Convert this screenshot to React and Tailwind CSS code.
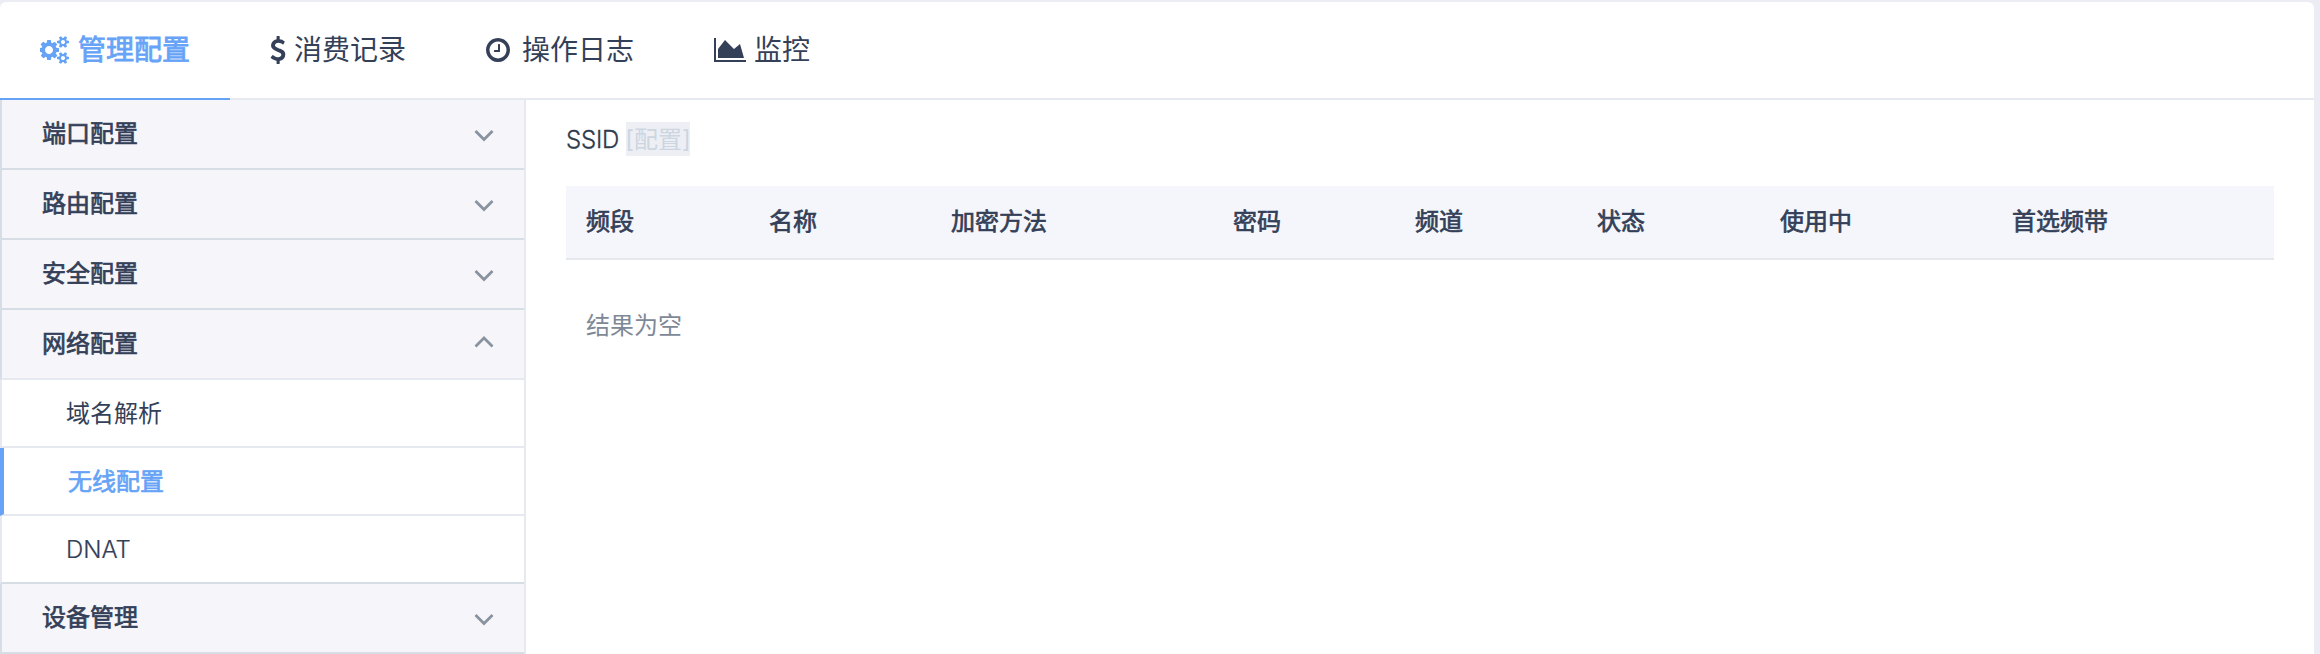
const COGS =
  "M832 896q0-106-75-181t-181-75-181 75-75 181 75 181 181 75 181-75 75-181zm768 512q0-52-38-90t-90-38-90 38-38 90q0 53 37.5 90.5t90.5 37.5 90.5-37.5 37.5-90.5zm0-1024q0-52-38-90t-90-38-90 38-38 90q0 53 37.5 90.5t90.5 37.5 90.5-37.5 37.5-90.5zm-384 421v185q0 10-7 19.5t-16 10.5l-155 24q-11 35-32 76 34 48 90 115 7 11 7 20 0 12-7 19-23 30-82.5 89.5t-78.5 59.5q-11 0-21-7l-115-90q-37 19-77 31-11 108-23 155-7 24-30 24h-186q-11 0-20-7.5t-10-17.5l-23-153q-34-10-75-31l-118 89q-7 7-20 7-11 0-21-8-144-133-144-160 0-9 7-19 10-14 41-53t47-61q-23-44-35-82l-152-24q-10-1-17-9.5t-7-19.5v-185q0-10 7-19.5t16-10.5l155-24q11-35 32-76-34-48-90-115-7-11-7-20 0-12 7-20 22-30 82-89t79-59q11 0 21 7l115 90q34-18 77-32 11-108 23-154 7-24 30-24h186q11 0 20 7.5t10 17.5l23 153q34 10 75 31l118-89q8-7 20-7 11 0 21 8 144 133 144 160 0 8-7 19-12 16-42 54t-45 60q23 48 34 82l152 23q10 2 17 10.5t7 19.5zm640 533v140q0 16-149 31-12 27-30 52 51 113 51 138 0 4-4 7-122 71-124 71-8 0-46-47t-52-68q-20 2-30 2t-30-2q-14 21-52 68t-46 47q-2 0-124-71-4-3-4-7 0-25 51-138-18-25-30-52-149-15-149-31v-140q0-16 149-31 13-29 30-52-51-113-51-138 0-4 4-7 4-2 35-20t59-34 30-16q8 0 46 46.5t52 67.5q20-2 30-2t30 2q51-71 92-112l6-2q4 0 124 70 4 3 4 7 0 25-51 138 17 23 30 52 149 15 149 31zm0-1024v140q0 16-149 31-12 27-30 52 51 113 51 138 0 4-4 7-122 71-124 71-8 0-46-47t-52-68q-20 2-30 2t-30-2q-14 21-52 68t-46 47q-2 0-124-71-4-3-4-7 0-25 51-138-18-25-30-52-149-15-149-31v-140q0-16 149-31 13-29 30-52-51-113-51-138 0-4 4-7 4-2 35-20t59-34 30-16q8 0 46 46.5t52 67.5q20-2 30-2t30 2q51-71 92-112l6-2q4 0 124 70 4 3 4 7 0 25-51 138 17 23 30 52 149 15 149 31z";
const DOLLAR =
  "M1362 1185q0 153-99.5 263.5t-258.5 136.5v175q0 14-9 23t-23 9h-135q-13 0-22.5-9.5t-9.5-22.5v-175q-66-9-127.5-31t-101.5-44.5-74-48-46.5-37.5-17.5-18q-17-21-2-41l103-135q7-10 23-12 15-2 24 9l2 2q113 99 243 125 37 8 74 8 81 0 142.5-43t61.5-122q0-28-15-53t-33.5-42-58.5-37.5-66-32-80-32.5q-39-16-61.5-25t-61.5-26.5-62.5-31-56.5-35.5-53.5-42.5-43.5-49-35.5-58-21-66.5-8.5-78q0-138 98-242t255-134v-180q0-13 9.5-22.5t22.5-9.5h135q14 0 23 9t9 23v176q57 6 110.5 23t87 33.5 63.5 37.5 39 29 15 14q17 18 5 38l-81 146q-8 15-23 16-14 3-27-7-3-3-14.5-12t-39-26.5-58.5-32-74.5-26-85.5-11.5q-95 0-155 43t-60 111q0 26 8.5 48t29.5 41.5 39.5 33 56 31 60.5 27 70 27.5q53 20 81 31.5t76 35 75.5 42.5 62 50 53 63.5 31.5 76.5 13 94z";
const CLOCK =
  "M1024 544v448q0 14-9 23t-23 9h-320q-14 0-23-9t-9-23v-64q0-14 9-23t23-9h224v-352q0-14 9-23t23-9h64q14 0 23 9t9 23zm416 352q0-148-73-273t-198-198-273-73-273 73-198 198-73 273 73 273 198 198 273 73 273-73 198-198 73-273zm224 0q0 209-103 385.5t-279.5 279.5-385.5 103-385.5-103-279.5-279.5-103-385.5 103-385.5 279.5-279.5 385.5-103 385.5 103 279.5 279.5 103 385.5z";
const AREA =
  "M2048 1536v128h-2048v-1536h128v1408h1920zm-384-1024l256 896h-1664v-576l448-576 576 576z";

const tabs = [
  { label: "管理配置", path: COGS, box: "0 0 1920 1792", icon: "w-[30px] mr-2", active: true },
  { label: "消费记录", path: DOLLAR, box: "384 0 1024 1792", icon: "w-4 mr-2" },
  { label: "操作日志", path: CLOCK, box: "128 0 1536 1792", icon: "w-6 mr-3" },
  { label: "监控", path: AREA, box: "0 0 2048 1792", icon: "w-8 mr-2" },
];

function Tab({ label, path, box, icon, active }) {
  return (
    <a
      className={`flex h-[98px] items-center border-b-2 px-10 text-[28px] leading-none ${
        active
          ? "border-[#66a3f7] text-[#66a3f7]"
          : "border-[#e6eaf0] text-[#343f58]"
      }`}
    >
      <svg viewBox={box} className={`mb-px h-7 shrink-0 fill-current ${icon}`}>
        <path d={path} />
      </svg>
      <span className={active ? "[-webkit-text-stroke:0.8px]" : ""}>{label}</span>
    </a>
  );
}

function Group({ label, open, children }) {
  return (
    <div>
      <div
        className={`flex h-[70px] items-center justify-between border-b-2 border-l-2 border-l-[#d6dde5] bg-[#f5f5fa] pr-[30px] pl-10 text-[#343f58] ${
          open ? "border-b-[#e6eaf0]" : "border-b-[#d6dde5]"
        }`}
      >
        <span className="[-webkit-text-stroke:0.7px]">{label}</span>
        <svg viewBox="0 0 20 14" className={`h-3.5 w-5 ${open ? "mb-1" : "mt-1"}`}>
          <path
            d={open ? "M1.5 11.5 10 3 18.5 11.5" : "M1.5 2 10 10.5 18.5 2"}
            fill="none"
            stroke="#89939f"
            strokeWidth="2.8"
          />
        </svg>
      </div>
      {children}
    </div>
  );
}

function Item({ label, active, last }) {
  return (
    <div
      className={`flex h-[68px] items-center border-b-2 pt-0.5 pl-16 ${
        active
          ? "border-l-4 border-l-[#66a3f7] text-[#66a3f7] [-webkit-text-stroke:0.7px]"
          : "border-l-2 border-l-[#e6eaf0] text-[#343f58]"
      } ${last ? "border-b-[#d6dde5]" : "border-b-[#e6eaf0]"}`}
    >
      {label}
    </div>
  );
}

export default function App() {
  return (
    <div className="h-[654px] w-[2320px] overflow-hidden bg-[#ecedf4] pt-0.5 pr-1.5 font-['Inter','Noto_Sans_CJK_SC',sans-serif] text-2xl">
      <div className="flex h-[652px] flex-col rounded-t-md bg-white">
        <nav className="flex shrink-0">
          {tabs.map((t) => (
            <Tab key={t.label} {...t} />
          ))}
          <div className="flex-1 border-b-2 border-[#e6eaf0]" />
        </nav>
        <div className="flex flex-1">
          <aside className="w-[526px] shrink-0 border-r-2 border-[#e6eaf0]">
            <Group label="端口配置" />
            <Group label="路由配置" />
            <Group label="安全配置" />
            <Group label="网络配置" open>
              <Item label="域名解析" />
              <Item label="无线配置" active />
              <Item label={<span className="font-light [-webkit-text-stroke:0.2px]">DNAT</span>} last />
            </Group>
            <Group label="设备管理" />
          </aside>
          <main className="flex-1 pt-[22px] pr-10 pl-10">
            <div className="flex h-[34px] items-center text-[#2c3a4b]">
              <span className="w-[60px] pt-0.5 font-light tracking-[-0.2px] [-webkit-text-stroke:0.3px]">SSID</span>
              <span className="flex h-[34px] w-16 items-center justify-center bg-[#eeeff5] pt-0.5 whitespace-nowrap text-[#ccd6e0]">
                [配置]
              </span>
            </div>
            <div className="mt-[30px] grid h-[74px] grid-cols-[183px_182px_282px_182px_182px_183px_232px_1fr] items-center border-b-2 border-[#e6e8ee] bg-[#f5f6fb] pl-5 text-[#343f58] [-webkit-text-stroke:0.7px]">
              <span>频段</span>
              <span>名称</span>
              <span>加密方法</span>
              <span>密码</span>
              <span>频道</span>
              <span>状态</span>
              <span>使用中</span>
              <span>首选频带</span>
            </div>
            <div className="flex h-[130px] items-center pt-0.5 pl-5 text-[#7e8997]">结果为空</div>
          </main>
        </div>
      </div>
    </div>
  );
}
